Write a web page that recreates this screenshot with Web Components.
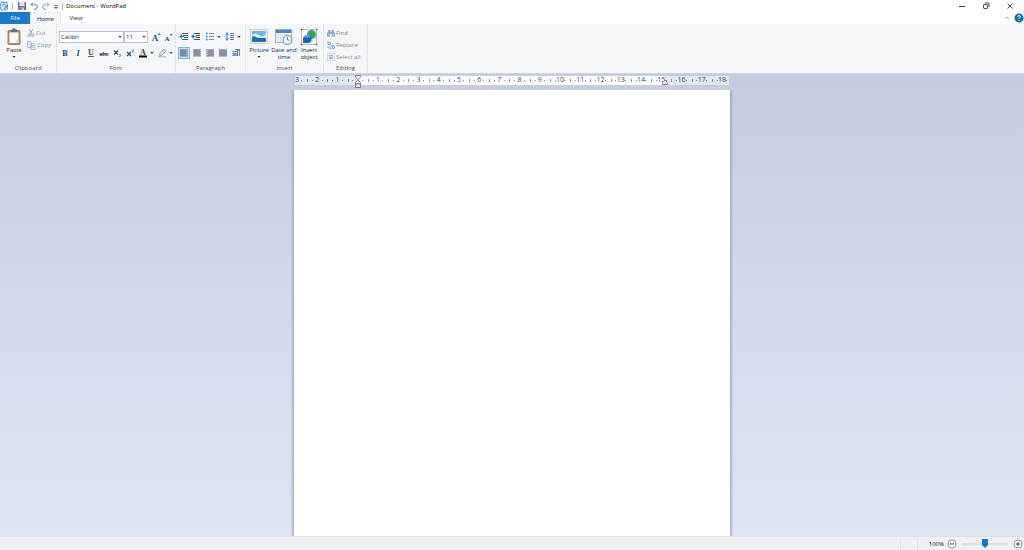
<!DOCTYPE html>
<html lang="en">
<head>
<meta charset="utf-8">
<title>Document - WordPad</title>
<style>
html, body { margin: 0; height: 100%; }
body { font: 6px/8px "Open Sans", "Noto Sans", sans-serif; color: #1f2733; overflow: hidden; }
</style>
</head>
<body>
<wp-app></wp-app>
<script>
const lines = (rows, c = '#64748c') => rows.map(([x, y, w]) => `<rect x="${x}" y="${y}" width="${w}" height="1" fill="${c}"/>`).join('');
const letter = (t, extra = '', x = 5, y = 7.5, size = 8) => `<text x="${x}" y="${y}" text-anchor="middle" font-family="Liberation Serif, serif" font-size="${size}" fill="#2f4566" font-weight="bold" ${extra}>${t}</text>`;
const full = [1, 2, 3, 4, 5, 6, 7].map(y => [1, y + .4, 8]);
const ICONS = {
  app: [10, 10, `<rect x=".5" y="1.5" width="7" height="7.5" rx="1" fill="#d7ebf8" stroke="#5793bd" stroke-width=".8"/><path d="M1 1h6" stroke="#397aa8" stroke-dasharray="1 .7"/><path d="M2 3.5h4M2 5h4" stroke="#4e96c5" stroke-width=".7"/><path d="M4 8l3-4 1 1-3 3z" fill="#3478aa"/>`],
  save: [10, 10, `<path d="M1 1h8v8H2L1 8z" fill="#7764ad"/><rect x="2.5" y="1" width="5" height="4" fill="#e7e7f5"/><rect x="3" y="6.5" width="4" height="2.5" fill="#d2d3e7"/><rect x="3.5" y="7" width="1" height="2" fill="#51447e"/>`],
  undo: [10, 10, `<path d="M2.5 3.5h3a2.3 2.3 0 0 1 1 4.5L5 9" fill="none" stroke="#9aafcb" stroke-width="1.7"/><path d="M1 3.5L4 .8v5.4z" fill="#9aafcb"/>`],
  redo: [10, 10, `<path d="M7 3.5H4.5A2.3 2.3 0 0 0 3.5 8L5 9" fill="none" stroke="#b0bfd2" stroke-width="1.7"/><path d="M9 3.5L6 .8v5.4z" fill="#b0bfd2"/>`],
  custom: [6, 10, `<path d="M1 4.5h4" stroke="#555" stroke-width=".8"/><path d="M1 6h4L3 8z" fill="#444"/>`],
  arrow: [4, 4, `<path d="M.5 1h3L2 3z" fill="#333"/>`],
  paste: [16, 18, `<rect x="2" y="2.5" width="12" height="14" rx="1" fill="#b98d60" stroke="#a58266"/><rect x="3.5" y="4.5" width="9" height="10.500" fill="#fafcff"/><path d="M5 1.500h1.5a1.5 1.5 0 0 1 3 0H11V4H5z" fill="#697078"/><path d="M12.5 11.500V15H9z" fill="#ccd8e5"/>`],
  cut: [8, 8, `<path d="M2 0l3 5M6 0L3 5" stroke="#9baec7" stroke-width="1" fill="none"/><circle cx="2.2" cy="6.2" r="1.2" fill="none" stroke="#91a6c3"/><circle cx="5.8" cy="6.2" r="1.2" fill="none" stroke="#91a6c3"/>`],
  copy: [9, 9, `<path d="M.5.5h3l1 1v5h-4zM3.5 2.5h3.500l1 1v5H3.500z" fill="#e7eef7" stroke="#a9bad2" stroke-width=".9"/><path d="M4.5 4.5h3M4.5 6h3M1.5 3h1.5" stroke="#9db1cc" stroke-width=".7"/>`],
  grow: [10, 10, letter('A', '', 4, 9, 9) + `<path d="M6.6 3L8.2 1l1.6 2z" fill="#2a82d0"/>`],
  shrink: [10, 10, letter('A', '', 4, 9, 7) + `<path d="M6.6 2h3.2L8.2 4z" fill="#2a82d0"/>`],
  bold: [10, 10, letter('B')],
  italic: [10, 10, letter('I', 'font-style="italic"')],
  underline: [10, 10, letter('U', '', 5, 7) + `<path d="M2 8.5h6" stroke="#2f4566" stroke-width=".8"/>`],
  strike: [10, 10, letter('abc', '', 5, 7.5, 6) + `<path d="M0 6h10" stroke="#2f4566" stroke-width=".7"/>`],
  sub: [10, 10, `<path d="M2 2.5l4 4M6 2.5l-4 4" stroke="#2f4566" stroke-width="1.2"/><path d="M7 6.5h1.5v1L7 8.5h1.5" fill="none" stroke="#2a82d0" stroke-width=".8"/>`],
  sup: [10, 10, `<path d="M2 4l4 4M6 4L2 8" stroke="#2f4566" stroke-width="1.2"/><path d="M7 2h1.5v1L7 4h1.5" fill="none" stroke="#2a82d0" stroke-width=".8"/>`],
  color: [10, 10, letter('A', '', 5, 7) + `<rect x="1" y="7.5" width="8" height="2" fill="#000"/>`],
  marker: [10, 10, `<path d="M3 5.5L7 1l2 1.7L5 7l-2.5.5z" fill="#e5ebf3" stroke="#7186a3" stroke-width=".8"/><rect x="1" y="8" width="8" height="1.5" fill="#bdc6d2"/>`],
  outdent: [10, 10, lines([[3, 1, 6], [4, 3, 5], [5, 5, 4], [3, 7, 6]], '#3f5878') + `<path d="M0 4.5l3-2.5v2h2v1H3v2z" fill="#2684d3"/>`],
  indent: [10, 10, lines([[3, 1, 6], [5, 3, 4], [5, 5, 4], [3, 7, 6]], '#3f5878') + `<path d="M0 4.5l3-2.5v2h2v1H3v2z" fill="#2684d3"/>`],
  bullets: [10, 10, lines([[4, 1, 5], [4, 4, 5], [4, 7, 5]], '#7e91aa') + `<path d="M1 .7h1.600v1.600H1zM1 3.700h1.600v1.600H1zM1 6.700h1.600v1.600H1z" fill="#218be2"/>`],
  spacing: [10, 10, lines([[5, 1, 4], [5, 3, 4], [5, 5, 4], [5, 7, 4]], '#657b98') + `<path d="M2 0L.3 2.5h1.2v4H.3L2 9l1.7-2.5H2.5v-4h1.2z" fill="#2684d3"/>`],
  left: [10, 10, lines(full.map(([x, y], i) => [1, y, i % 2 ? 6 : 8]))],
  center: [10, 10, lines(full.map(([x, y], i) => i % 2 ? [2, y, 6] : [1, y, 8]))],
  right: [10, 10, lines(full.map(([x, y], i) => i % 2 ? [3, y, 6] : [1, y, 8]))],
  justify: [10, 10, lines(full)],
  para: [10, 10, lines([[4, 1, 5], [1, 3, 5], [1, 5, 4], [1, 7, 5]], '#8297b3') + `<path d="M5 2h4M6.5 2v6M8.3 2v6" stroke="#4b6d98" stroke-width=".9"/><path d="M2 6l2-2v1.5h2v1H4V8z" fill="#2684d3"/>`],
  picture: [18, 18, `<rect x=".5" y="1.5" width="17" height="14" fill="#fff" stroke="#c3cad2"/><rect x="2" y="3" width="14" height="11" fill="#66b6ec"/><path d="M2 7q3-3 7 0t7-1v4H2z" fill="#d8f0fc"/><path d="M2 8.500q3-1 6 1.500h8v1H2z" fill="#24865f"/><path d="M2 10.500q7-1 14 .5v3H2z" fill="#1970b8"/>`],
  date: [18, 18, `<rect x=".5" y="1.5" width="16" height="13" fill="#fff" stroke="#9dacbe"/><rect x="1" y="2" width="15" height="3" fill="#4b86c4"/><path d="M2 7h13M2 9.5h13M2 12h13" stroke="#a8b8cb" stroke-dasharray="2 1"/><circle cx="12.5" cy="12" r="4.5" fill="#eef4fa" stroke="#74879d"/><path d="M12.5 9v3h2.5" fill="none" stroke="#44678e" stroke-width=".8"/>`],
  object: [18, 18, `<rect x="1.5" y="1.5" width="15" height="15" fill="#fff" stroke="#9aa2ab" stroke-width=".7"/><circle cx="11.500" cy="6.500" r="4.5" fill="#35a853"/><path d="M3 9.500l2-2h6.500V13l-2 2H3z" fill="#1267bc"/><path d="M3 9.500l2-2h6.500l-2 2z" fill="#55a9ed"/><path d="M.7.7h1.600v1.600H.7zM15.700.7h1.600v1.600h-1.600zM.7 15.700h1.600v1.600H.7zM15.700 15.700h1.600v1.600h-1.600z" fill="#606b77"/>`],
  find: [8, 8, `<path d="M1.5 1h2v2h1V1h2L8 5v2.5H5V5H3v2.5H0V5z" fill="#8fa7c5"/><path d="M1 5.5h1M6 5.5h1" stroke="#dce8f5"/>`],
  replace: [8, 8, `<path d="M1 0v3.5h2.5V1.5H1M5 4v3.5h2.5V5H5" fill="none" stroke="#8fa7c5"/><path d="M1 5v2h3M2.8 5.8L4 7 2.8 8" fill="none" stroke="#7ba9d7" stroke-width=".8"/>`],
  selectall: [8, 8, `<rect x=".5" y=".5" width="7" height="7" fill="#edf3fa" stroke="#a9bad0" stroke-width=".8" stroke-dasharray="1 .6"/><path d="M2 2.5h4M2 4h4M2 5.5h4" stroke="#8fa7c5" stroke-width=".9"/>`],
  min: [10, 10, `<path d="M2 5.5h6" stroke="#333"/>`],
  restore: [10, 10, `<rect x="2.5" y="3.5" width="4" height="4" rx=".7" fill="none" stroke="#333" stroke-width=".9"/><path d="M4 2h3.3q.7 0 .7.7V6" fill="none" stroke="#333" stroke-width=".9"/>`],
  close: [10, 10, `<path d="M2.5 2.5l5 5M7.5 2.5l-5 5" stroke="#333" stroke-width=".9"/>`],
  collapse: [8, 8, `<path d="M2 5l2-2 2 2" fill="none" stroke="#8a93a0" stroke-width=".8"/>`],
  help: [10, 10, `<circle cx="5" cy="5" r="4.5" fill="#0c67b8"/><path d="M3.5 4q0-1.5 1.5-1.5T6.5 4Q6.5 4.7 5 5.5v.6M5 7v1" fill="none" stroke="#fff" stroke-width="1"/>`],
  minus: [10, 10, `<circle cx="5" cy="5" r="4" fill="#fff" stroke="#6f7378" stroke-width=".8"/><path d="M3 5h4" stroke="#444"/>`],
  plus: [10, 10, `<circle cx="5" cy="5" r="4" fill="#fff" stroke="#6f7378" stroke-width=".8"/><path d="M3 5h4M5 3v4" stroke="#444"/>`],
  hourglass: [8, 16, `<path d="M1.5 1.5h5V3l-2 2.5v1l2 2V10h-5V8.500l2-2v-1L1.500 3z" fill="#f5f7fa" stroke="#66758c" stroke-width=".9"/><rect x="1.5" y="10" width="5" height="3.5" fill="#f5f7fa" stroke="#66758c" stroke-width=".9"/>`],
  rightmark: [8, 8, `<path d="M1.5 6.500V4.500L4 2l2.500 2.500v2z" fill="#f5f7fa" stroke="#66758c" stroke-width=".9"/>`]
};

const define = (name, html) => customElements.define(name, class extends HTMLElement {
  constructor() {
    super();
    const t = document.createElement('template');
    t.innerHTML = typeof html === 'function' ? html(this) : html;
    this.attachShadow({ mode: 'open' }).append(t.content.cloneNode(true));
  }
});
const RESET = `*{box-sizing:border-box} button{font:inherit;color:inherit;background:none;border:0;padding:0;margin:0}`;

define('wp-icon', el => {
  const [w, h, body] = ICONS[el.getAttribute('name')];
  return `<style>:host{display:block;flex:none}svg{display:block}</style><svg width="${w}" height="${h}" viewBox="0 0 ${w} ${h}" aria-hidden="true">${body}</svg>`;
});

/* Small icon button, optionally with a text label or a drop-down arrow */
define('wp-tool', el => `<style>${RESET}
:host{display:block;flex:none}
button{display:flex;align-items:center;justify-content:center;min-width:12px;height:12px;border:1px solid transparent}
:host([menu]) button{gap:2px}
:host([text]) button{gap:1px;color:#858c97}
:host([pressed]) button{background:#c5def5;border-color:#86b8e4}
</style><button type="button" aria-label="${el.getAttribute('label')}"><wp-icon name="${el.getAttribute('icon')}"></wp-icon>${el.hasAttribute('text') ? `<span>${el.getAttribute('label')}</span>` : ''}${el.hasAttribute('menu') ? '<wp-icon name="arrow"></wp-icon>' : ''}</button>`);

/* Tall button: icon above a caption of one or two lines */
define('wp-big', el => `<style>${RESET}
:host{display:block;flex:none}
button{display:flex;flex-direction:column;align-items:center;line-height:7px;width:100%}
wp-icon[name=arrow]{margin-top:1px}
.i{height:20px;padding-top:1px}
</style><button type="button"><span class="i"><wp-icon name="${el.getAttribute('icon')}"></wp-icon></span><slot></slot>${el.hasAttribute('menu') ? '<wp-icon name="arrow"></wp-icon>' : ''}</button>`);

define('wp-group', el => `<style>${RESET}
:host{display:flex;flex-direction:column;flex:none;border-right:1px solid #e4e7eb}
.body{flex:1;display:flex;padding:3px 2px 0}
.cap{text-align:center;color:#4d545e;height:9px}
</style><div class="body"><slot></slot></div><div class="cap">${el.getAttribute('caption')}</div>`);

define('wp-combo', el => `<style>${RESET}
:host{display:block;position:relative}
select{display:block;appearance:none;width:100%;height:12px;font:inherit;color:#1f2733;background:#fff;border:1px solid #b7c5da;border-radius:0;padding:0 1px;margin:0}
wp-icon{position:absolute;right:2px;top:4px;pointer-events:none}
</style><select aria-label="${el.getAttribute('label')}"><option>${el.getAttribute('value')}</option></select><wp-icon name="arrow"></wp-icon>`);

define('wp-titlebar', `<style>${RESET}
:host{display:flex;align-items:center;height:12px;background:#fff;color:#000}
.sep{width:1px;height:7px;background:#b4b4b4}
.first{margin:0 4px 0 2px}
.last{margin-left:3px}
.quick{display:flex;align-items:center;gap:2px}
h1{font:inherit;margin:0 0 0 3px;flex:1}
.win{display:flex;gap:14px;padding-right:9px}
button{display:block}
</style>
<wp-icon name="app"></wp-icon><span class="sep first"></span>
<div class="quick"><button aria-label="Save"><wp-icon name="save"></wp-icon></button><button aria-label="Undo"><wp-icon name="undo"></wp-icon></button><button aria-label="Redo"><wp-icon name="redo"></wp-icon></button><button aria-label="Customize"><wp-icon name="custom"></wp-icon></button></div>
<span class="sep last"></span><h1>Document - WordPad</h1>
<div class="win"><button aria-label="Minimize"><wp-icon name="min"></wp-icon></button><button aria-label="Restore"><wp-icon name="restore"></wp-icon></button><button aria-label="Close"><wp-icon name="close"></wp-icon></button></div>`);

define('wp-tabs', `<style>${RESET}
:host{display:flex;height:12px;background:#fff;align-items:stretch}
button{width:30px;color:#222}
.file{background:#1979ca;color:#fff}
.on{background:#f5f6f7;border:1px solid #e4e7eb;border-bottom:0;width:31px}
.end{margin-left:auto;display:flex;align-items:center;gap:3px}
.end button{width:auto}
</style><button class="file">File</button><button class="on">Home</button><button>View</button>
<div class="end"><button aria-label="Collapse ribbon"><wp-icon name="collapse"></wp-icon></button><button aria-label="Help"><wp-icon name="help"></wp-icon></button></div>`);

define('wp-ribbon', `<style>${RESET}
:host{display:flex;height:50px;background:#f5f6f7;border-bottom:1px solid #ccd3e0}
.col{display:flex;flex-direction:column;align-items:flex-start}
.row{display:flex;align-items:center}
.two{gap:4px;padding-top:4px}
.tight{gap:1px}
.next{margin-left:2px}
</style>
<wp-group caption="Clipboard" style="width:57px"><wp-big icon="paste" menu style="width:24px">Paste</wp-big>
<div class="col"><wp-tool text icon="cut" label="Cut"></wp-tool><wp-tool text icon="copy" label="Copy"></wp-tool></div></wp-group>
<wp-group caption="Font" style="width:119px"><div class="col two">
<div class="row"><wp-combo label="Font family" value="Calibri" style="width:65px"></wp-combo><wp-combo label="Font size" value="11" style="width:24px"></wp-combo><wp-tool class="next" icon="grow" label="Grow font"></wp-tool><wp-tool icon="shrink" label="Shrink font"></wp-tool></div>
<div class="row tight"><wp-tool icon="bold" label="Bold"></wp-tool><wp-tool icon="italic" label="Italic"></wp-tool><wp-tool icon="underline" label="Underline"></wp-tool><wp-tool icon="strike" label="Strikethrough"></wp-tool><wp-tool icon="sub" label="Subscript"></wp-tool><wp-tool icon="sup" label="Superscript"></wp-tool><wp-tool menu icon="color" label="Text color"></wp-tool><wp-tool menu icon="marker" label="Highlight"></wp-tool></div></div></wp-group>
<wp-group caption="Paragraph" style="width:70px"><div class="col two">
<div class="row"><wp-tool icon="outdent" label="Decrease indent"></wp-tool><wp-tool icon="indent" label="Increase indent"></wp-tool><wp-tool class="next" menu icon="bullets" label="Start a list"></wp-tool><wp-tool class="next" menu icon="spacing" label="Line spacing"></wp-tool></div>
<div class="row tight"><wp-tool pressed icon="left" label="Align left"></wp-tool><wp-tool icon="center" label="Center"></wp-tool><wp-tool icon="right" label="Align right"></wp-tool><wp-tool icon="justify" label="Justify"></wp-tool><wp-tool icon="para" label="Paragraph"></wp-tool></div></div></wp-group>
<wp-group caption="Insert" style="width:78px"><wp-big icon="picture" menu style="width:22px">Picture</wp-big><wp-big icon="date" style="width:28px">Date and<br>time</wp-big><wp-big icon="object" style="width:22px">Insert<br>object</wp-big></wp-group>
<wp-group caption="Editing" style="width:44px"><div class="col"><wp-tool text icon="find" label="Find"></wp-tool><wp-tool text icon="replace" label="Replace"></wp-tool><wp-tool text icon="selectall" label="Select all"></wp-tool></div></wp-group>`);

/* Centimetre scale; every cell is centred on its number */
define('wp-ruler', () => {
  let cells = '';
  for (let n = -3; n <= 18; n++) cells += `<span>${n === 0 ? '' : Math.abs(n)}</span>`;
  return `<style>
:host{display:block;position:relative;height:9px;margin:2px 1px 5px;background:linear-gradient(90deg,#e2e8f2 14.6%,#fff 14.6% 85.3%,#e2e8f2 85.3%);color:#3c4a60;font-size:7px}
.clip{overflow:hidden;height:9px}
.scale{display:grid;grid-template-columns:repeat(22,1fr);margin:0 -3px 0 -8px}
span{text-align:center;height:9px;line-height:8px;
background:linear-gradient(#8390a4,#8390a4) left center/1px 3px no-repeat,linear-gradient(#75839a,#75839a) 25% center/1px 1px no-repeat,linear-gradient(#75839a,#75839a) 75% center/1px 1px no-repeat}
wp-icon{position:absolute}
.l{left:calc(14.6% - 4px);top:-2px}.r{left:calc(85.3% - 4px);top:2px}
</style><div class="clip"><div class="scale">${cells}</div></div><wp-icon class="l" name="hourglass"></wp-icon><wp-icon class="r" name="rightmark"></wp-icon>`;
});

define('wp-canvas', `<style>
:host{display:flex;flex-direction:column;align-items:center;flex:1;min-height:0;background:linear-gradient(#c4cddf,#dde7f3)}
.doc{width:42.6%;flex:1;display:flex;flex-direction:column}
.page{flex:1;background:#fff;outline:none;box-shadow:0 1px 3px 1px #8a9ab4;clip-path:inset(0 -4px)}
</style><div class="doc"><wp-ruler></wp-ruler><div class="page" role="textbox" aria-label="Document" contenteditable="true"></div></div>`);

define('wp-status', `<style>${RESET}
:host{display:flex;align-items:center;justify-content:flex-end;height:14px;background:#f0f0f0;border-top:1px solid #dcdfe3;color:#111}
*{box-sizing:border-box}
.sep{width:1px;height:12px;background:#e2e2e2;margin-right:16px}
.zoom{display:flex;align-items:center;gap:3px;margin-left:-5px;padding-right:1px}
input{appearance:none;width:50px;height:10px;margin:0;background:linear-gradient(#dedede,#dedede) center/46px 2px no-repeat}
input::-webkit-slider-thumb{appearance:none;width:6px;height:9px;background:#0a78d4;clip-path:polygon(0 0,100% 0,100% 70%,50% 100%,0 70%)}
button{display:block}
</style><span class="sep"></span><span class="sep"></span>
<div class="zoom"><label for="z">100%</label><button aria-label="Zoom out"><wp-icon name="minus"></wp-icon></button><input id="z" type="range" min="0" max="200" value="100"><button aria-label="Zoom in"><wp-icon name="plus"></wp-icon></button></div>`.replace('height:14px', 'height:13px'));

define('wp-app', `<style>:host{display:flex;flex-direction:column;height:100vh}wp-ribbon{box-sizing:border-box}</style>
<wp-titlebar></wp-titlebar><wp-tabs></wp-tabs><wp-ribbon></wp-ribbon><wp-canvas></wp-canvas><wp-status></wp-status>`);
</script>
</body>
</html>
